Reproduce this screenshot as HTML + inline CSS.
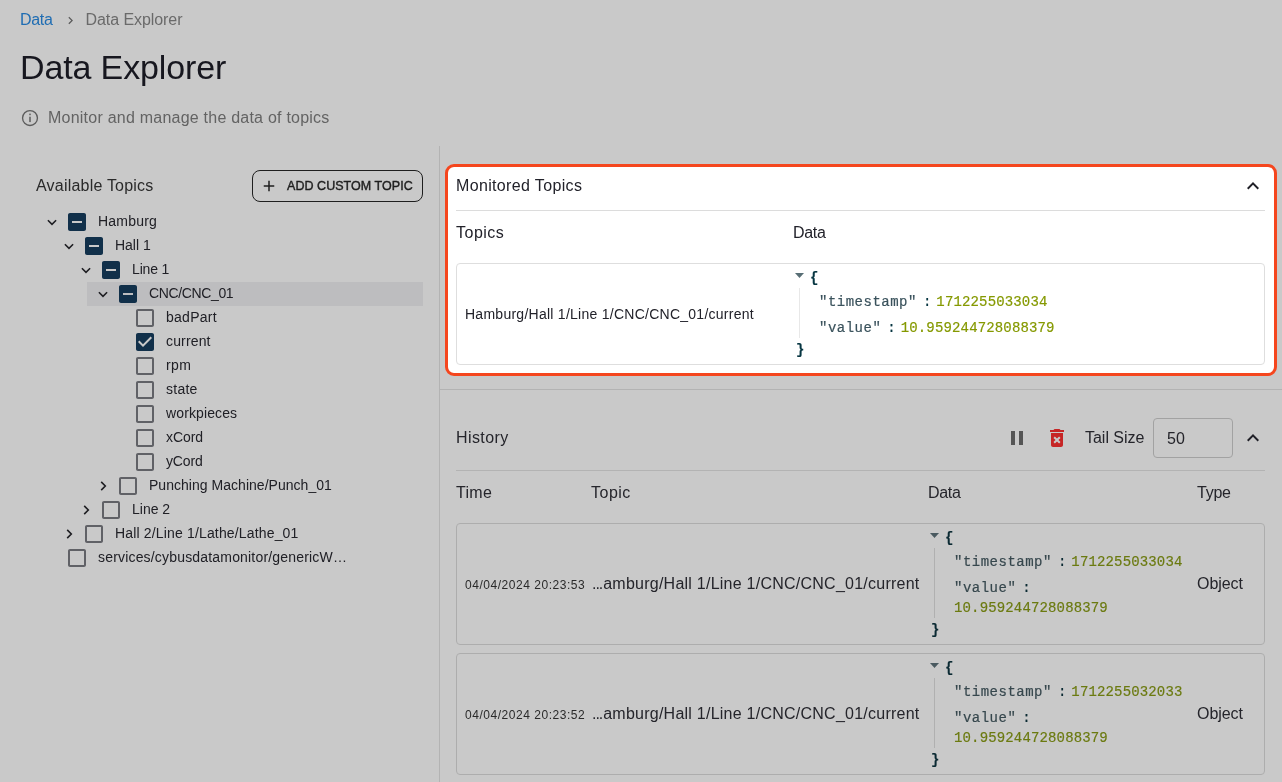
<!DOCTYPE html>
<html><head><meta charset="utf-8">
<style>
*{box-sizing:border-box;margin:0;padding:0}
html,body{width:1282px;height:782px;overflow:hidden;background:#c9c9c9}
body{position:relative;font-family:"Liberation Sans",sans-serif;color:#1c1c22}
.a{position:absolute;white-space:nowrap;line-height:1}
.mono{font-family:"Liberation Mono",monospace;-webkit-text-stroke:0.2px}
svg{position:absolute;display:block}
</style></head><body><div id="root" style="position:absolute;left:0;top:0;width:1282px;height:782px;will-change:transform">
<div class="a" style="left:20px;top:12px;font-size:16px;color:#1f6db3;letter-spacing:-0.34px;">Data</div>
<svg style="left:62.5px;top:13px" width="15" height="15" viewBox="0 0 24 24"><path fill="#5c5c5c" d="M10 6 8.59 7.41 13.17 12l-4.58 4.59L10 18l6-6z"/></svg>
<div class="a" style="left:85.5px;top:12px;font-size:16px;color:#6a6a6a;letter-spacing:-0.07px;">Data Explorer</div>
<div class="a" style="left:20px;top:50px;font-size:34px;color:#17171f;letter-spacing:-0.13px;">Data Explorer</div>
<svg style="left:20px;top:108px" width="20" height="20" viewBox="0 0 20 20"><circle cx="10" cy="10" r="7.45" fill="none" stroke="#5c5c5c" stroke-width="1.35"/><rect x="9.25" y="5.6" width="1.5" height="1.6" fill="#5c5c5c"/><rect x="9.25" y="8.7" width="1.5" height="5.4" fill="#5c5c5c"/></svg>
<div class="a" style="left:48px;top:110px;font-size:16px;color:#636363;letter-spacing:0.23px;">Monitor and manage the data of topics</div>
<div class="a" style="left:439px;top:146px;width:1px;height:636px;background:#b3b3b3"></div>
<div class="a" style="left:440px;top:389px;width:842px;height:1px;background:#b3b3b3"></div>
<div class="a" style="left:36px;top:178px;font-size:16px;color:#2a2a2a;letter-spacing:0.21px;">Available Topics</div>
<div class="a" style="left:252px;top:170px;width:171px;height:32px;border:1px solid #1e1e1e;border-radius:8px"></div>
<svg style="left:260px;top:177px" width="18" height="18" viewBox="0 0 24 24"><path fill="#1e1e1e" d="M19 13h-6v6h-2v-6H5v-2h6V5h2v6h6v2z"/></svg>
<div class="a" style="left:287px;top:180px;font-size:12.5px;color:#1e1e1e;letter-spacing:0.05px;-webkit-text-stroke:0.4px #1e1e1e;">ADD CUSTOM TOPIC</div>
<div class="a" style="left:87px;top:282px;width:336px;height:24px;background:#bdbdbf"></div>
<svg style="left:47px;top:218.6px" width="10" height="7" viewBox="0 0 10 7"><path fill="none" stroke="#1e1e22" stroke-width="1.6" d="M0.9 1.2 5 5.3 9.1 1.2"/></svg>
<svg style="left:65px;top:210px" width="24" height="24" viewBox="0 0 24 24"><path fill="#11304a" d="M19 3H5c-1.1 0-2 .9-2 2v14c0 1.1.9 2 2 2h14c1.1 0 2-.9 2-2V5c0-1.1-.9-2-2-2zm-2 10H7v-2h10v2z"/></svg>
<div class="a" style="left:98px;top:214px;font-size:14px;color:#202026;letter-spacing:0.2px;">Hamburg</div>
<svg style="left:64px;top:242.6px" width="10" height="7" viewBox="0 0 10 7"><path fill="none" stroke="#1e1e22" stroke-width="1.6" d="M0.9 1.2 5 5.3 9.1 1.2"/></svg>
<svg style="left:82px;top:234px" width="24" height="24" viewBox="0 0 24 24"><path fill="#11304a" d="M19 3H5c-1.1 0-2 .9-2 2v14c0 1.1.9 2 2 2h14c1.1 0 2-.9 2-2V5c0-1.1-.9-2-2-2zm-2 10H7v-2h10v2z"/></svg>
<div class="a" style="left:115px;top:238px;font-size:14px;color:#202026;letter-spacing:-0.02px;">Hall 1</div>
<svg style="left:81px;top:266.6px" width="10" height="7" viewBox="0 0 10 7"><path fill="none" stroke="#1e1e22" stroke-width="1.6" d="M0.9 1.2 5 5.3 9.1 1.2"/></svg>
<svg style="left:99px;top:258px" width="24" height="24" viewBox="0 0 24 24"><path fill="#11304a" d="M19 3H5c-1.1 0-2 .9-2 2v14c0 1.1.9 2 2 2h14c1.1 0 2-.9 2-2V5c0-1.1-.9-2-2-2zm-2 10H7v-2h10v2z"/></svg>
<div class="a" style="left:132px;top:262px;font-size:14px;color:#202026;letter-spacing:-0.16px;">Line 1</div>
<svg style="left:98px;top:290.6px" width="10" height="7" viewBox="0 0 10 7"><path fill="none" stroke="#1e1e22" stroke-width="1.6" d="M0.9 1.2 5 5.3 9.1 1.2"/></svg>
<svg style="left:116px;top:282px" width="24" height="24" viewBox="0 0 24 24"><path fill="#11304a" d="M19 3H5c-1.1 0-2 .9-2 2v14c0 1.1.9 2 2 2h14c1.1 0 2-.9 2-2V5c0-1.1-.9-2-2-2zm-2 10H7v-2h10v2z"/></svg>
<div class="a" style="left:149px;top:286px;font-size:14px;color:#202026;letter-spacing:-0.37px;">CNC/CNC_01</div>
<svg style="left:133px;top:306px" width="24" height="24" viewBox="0 0 24 24"><path fill="#606166" d="M19 5v14H5V5h14m0-2H5c-1.11 0-2 .9-2 2v14c0 1.1.89 2 2 2h14c1.1 0 2-.9 2-2V5c0-1.1-.9-2-2-2z"/></svg>
<div class="a" style="left:166px;top:310px;font-size:14px;color:#202026;letter-spacing:0.26px;">badPart</div>
<svg style="left:133px;top:330px" width="24" height="24" viewBox="0 0 24 24"><path fill="#11304a" d="M19 3H5c-1.11 0-2 .9-2 2v14c0 1.1.89 2 2 2h14c1.1 0 2-.9 2-2V5c0-1.1-.9-2-2-2zm-9 14l-5-5 1.41-1.41L10 14.17l7.59-7.59L19 8l-9 9z"/></svg>
<div class="a" style="left:166px;top:334px;font-size:14px;color:#202026;letter-spacing:0.15px;">current</div>
<svg style="left:133px;top:354px" width="24" height="24" viewBox="0 0 24 24"><path fill="#606166" d="M19 5v14H5V5h14m0-2H5c-1.11 0-2 .9-2 2v14c0 1.1.89 2 2 2h14c1.1 0 2-.9 2-2V5c0-1.1-.9-2-2-2z"/></svg>
<div class="a" style="left:166px;top:358px;font-size:14px;color:#202026;letter-spacing:0.4px;">rpm</div>
<svg style="left:133px;top:378px" width="24" height="24" viewBox="0 0 24 24"><path fill="#606166" d="M19 5v14H5V5h14m0-2H5c-1.11 0-2 .9-2 2v14c0 1.1.89 2 2 2h14c1.1 0 2-.9 2-2V5c0-1.1-.9-2-2-2z"/></svg>
<div class="a" style="left:166px;top:382px;font-size:14px;color:#202026;letter-spacing:0.26px;">state</div>
<svg style="left:133px;top:402px" width="24" height="24" viewBox="0 0 24 24"><path fill="#606166" d="M19 5v14H5V5h14m0-2H5c-1.11 0-2 .9-2 2v14c0 1.1.89 2 2 2h14c1.1 0 2-.9 2-2V5c0-1.1-.9-2-2-2z"/></svg>
<div class="a" style="left:166px;top:406px;font-size:14px;color:#202026;letter-spacing:0.12px;">workpieces</div>
<svg style="left:133px;top:426px" width="24" height="24" viewBox="0 0 24 24"><path fill="#606166" d="M19 5v14H5V5h14m0-2H5c-1.11 0-2 .9-2 2v14c0 1.1.89 2 2 2h14c1.1 0 2-.9 2-2V5c0-1.1-.9-2-2-2z"/></svg>
<div class="a" style="left:166px;top:430px;font-size:14px;color:#202026;letter-spacing:-0.08px;">xCord</div>
<svg style="left:133px;top:450px" width="24" height="24" viewBox="0 0 24 24"><path fill="#606166" d="M19 5v14H5V5h14m0-2H5c-1.11 0-2 .9-2 2v14c0 1.1.89 2 2 2h14c1.1 0 2-.9 2-2V5c0-1.1-.9-2-2-2z"/></svg>
<div class="a" style="left:166px;top:454px;font-size:14px;color:#202026;letter-spacing:-0.15px;">yCord</div>
<svg style="left:100px;top:481px" width="7" height="10" viewBox="0 0 7 10"><path fill="none" stroke="#1e1e22" stroke-width="1.6" d="M1.2 0.9 5.3 5 1.2 9.1"/></svg>
<svg style="left:116px;top:474px" width="24" height="24" viewBox="0 0 24 24"><path fill="#606166" d="M19 5v14H5V5h14m0-2H5c-1.11 0-2 .9-2 2v14c0 1.1.89 2 2 2h14c1.1 0 2-.9 2-2V5c0-1.1-.9-2-2-2z"/></svg>
<div class="a" style="left:149px;top:478px;font-size:14px;color:#202026;letter-spacing:0.03px;">Punching Machine/Punch_01</div>
<svg style="left:83px;top:505px" width="7" height="10" viewBox="0 0 7 10"><path fill="none" stroke="#1e1e22" stroke-width="1.6" d="M1.2 0.9 5.3 5 1.2 9.1"/></svg>
<svg style="left:99px;top:498px" width="24" height="24" viewBox="0 0 24 24"><path fill="#606166" d="M19 5v14H5V5h14m0-2H5c-1.11 0-2 .9-2 2v14c0 1.1.89 2 2 2h14c1.1 0 2-.9 2-2V5c0-1.1-.9-2-2-2z"/></svg>
<div class="a" style="left:132px;top:502px;font-size:14px;color:#202026;letter-spacing:0px;">Line 2</div>
<svg style="left:66px;top:529px" width="7" height="10" viewBox="0 0 7 10"><path fill="none" stroke="#1e1e22" stroke-width="1.6" d="M1.2 0.9 5.3 5 1.2 9.1"/></svg>
<svg style="left:82px;top:522px" width="24" height="24" viewBox="0 0 24 24"><path fill="#606166" d="M19 5v14H5V5h14m0-2H5c-1.11 0-2 .9-2 2v14c0 1.1.89 2 2 2h14c1.1 0 2-.9 2-2V5c0-1.1-.9-2-2-2z"/></svg>
<div class="a" style="left:115px;top:526px;font-size:14px;color:#202026;letter-spacing:0.16px;">Hall 2/Line 1/Lathe/Lathe_01</div>
<svg style="left:65px;top:546px" width="24" height="24" viewBox="0 0 24 24"><path fill="#606166" d="M19 5v14H5V5h14m0-2H5c-1.11 0-2 .9-2 2v14c0 1.1.89 2 2 2h14c1.1 0 2-.9 2-2V5c0-1.1-.9-2-2-2z"/></svg>
<div class="a" style="left:98px;top:550px;font-size:14px;color:#202026;letter-spacing:0.18px;">services/cybusdatamonitor/genericW…</div>
<div class="a" style="left:445px;top:164px;width:832px;height:212px;border:3px solid #f5461e;border-radius:9px;background:#fff"></div>
<div class="a" style="left:456px;top:178px;font-size:16px;color:#22222a;letter-spacing:0.35px;">Monitored Topics</div>
<svg style="left:1241px;top:174px" width="24" height="24" viewBox="0 0 24 24"><path fill="#1f1f27" d="m12 8-6 6 1.41 1.41L12 10.83l4.59 4.58L18 14z"/></svg>
<div class="a" style="left:456px;top:210px;width:809px;height:1px;background:#dcdcdc"></div>
<div class="a" style="left:456px;top:225px;font-size:16px;color:#22222a;letter-spacing:0.5px;">Topics</div>
<div class="a" style="left:793px;top:225px;font-size:16px;color:#22222a;letter-spacing:-0.3px;">Data</div>
<div class="a" style="left:456px;top:263px;width:809px;height:102px;border:1px solid #dedede;border-radius:4px"></div>
<div class="a" style="left:465px;top:307px;font-size:14px;color:#22222a;letter-spacing:0.26px;">Hamburg/Hall 1/Line 1/CNC/CNC_01/current</div>
<svg style="left:795px;top:273px" width="9" height="5" viewBox="0 0 9 5"><path fill="#586e75" d="M0 0h9L4.5 5z"/></svg>
<div class="a mono" style="left:810px;top:271px;font-size:14px;color:#073642;letter-spacing:0px;font-weight:700;">{</div>
<div class="a" style="left:799px;top:288px;width:1px;height:50px;background:#e8e8e8"></div>
<div class="a mono" style="left:819px;top:295px;font-size:14px;color:#3a525c;letter-spacing:0px;"><span style="letter-spacing:0.5px">"timestamp"</span><span style="margin:0 5px 0 6px;color:#073642">:</span><span style="color:#859900;letter-spacing:0.15px">1712255033034</span></div>
<div class="a mono" style="left:819px;top:321px;font-size:14px;color:#3a525c;letter-spacing:0px;"><span style="letter-spacing:0.5px">"value"</span><span style="margin:0 5px 0 6px;color:#073642">:</span><span style="color:#859900;letter-spacing:0.15px">10.959244728088379</span></div>
<div class="a mono" style="left:796px;top:343px;font-size:14px;color:#073642;letter-spacing:0px;font-weight:700;">}</div>
<div class="a" style="left:456px;top:430px;font-size:16px;color:#25252b;letter-spacing:0.41px;">History</div>
<svg style="left:1005px;top:426px" width="24" height="24" viewBox="0 0 24 24"><path fill="#555" d="M6 19h4V5H6v14zm8-14v14h4V5h-4z"/></svg>
<svg style="left:1045px;top:426px" width="24" height="24" viewBox="0 0 24 24"><path fill="#c62525" d="M6 19c0 1.1.9 2 2 2h8c1.1 0 2-.9 2-2V7H6v12zm2.46-7.12 1.41-1.41L12 12.59l2.12-2.12 1.41 1.41L13.41 14l2.12 2.12-1.41 1.41L12 15.41l-2.12 2.12-1.41-1.41L10.59 14l-2.13-2.12zM15.5 4l-1-1h-5l-1 1H5v2h14V4z"/></svg>
<div class="a" style="left:1085px;top:430px;font-size:16px;color:#25252b;letter-spacing:-0.02px;">Tail Size</div>
<div class="a" style="left:1153px;top:418px;width:80px;height:40px;border:1px solid #a2a2a2;border-radius:4px"></div>
<div class="a" style="left:1167px;top:431px;font-size:16px;color:#25252b;letter-spacing:0.15px;">50</div>
<svg style="left:1241px;top:426px" width="24" height="24" viewBox="0 0 24 24"><path fill="#1f1f27" d="m12 8-6 6 1.41 1.41L12 10.83l4.59 4.58L18 14z"/></svg>
<div class="a" style="left:456px;top:470px;width:809px;height:1px;background:#b3b3b3"></div>
<div class="a" style="left:456px;top:485px;font-size:16px;color:#25252b;letter-spacing:0.28px;">Time</div>
<div class="a" style="left:591px;top:485px;font-size:16px;color:#25252b;letter-spacing:0.5px;">Topic</div>
<div class="a" style="left:928px;top:485px;font-size:16px;color:#25252b;letter-spacing:-0.3px;">Data</div>
<div class="a" style="left:1197px;top:485px;font-size:16px;color:#25252b;letter-spacing:-0.25px;">Type</div>
<div class="a" style="left:456px;top:523px;width:809px;height:122px;border:1px solid #adadad;border-radius:4px"></div>
<div class="a" style="left:465px;top:579px;font-size:12px;color:#2a2a2a;letter-spacing:0.53px;">04/04/2024 20:23:53</div>
<div class="a" style="left:592px;top:576px;font-size:16px;color:#25252b;letter-spacing:0.245px;"><span style="letter-spacing:-1.05px;margin-right:1px">...</span>amburg/Hall 1/Line 1/CNC/CNC_01/current</div>
<div class="a" style="left:1197px;top:576px;font-size:16px;color:#25252b;letter-spacing:-0.07px;">Object</div>
<svg style="left:930px;top:533px" width="9" height="5" viewBox="0 0 9 5"><path fill="#4a5a60" d="M0 0h9L4.5 5z"/></svg>
<div class="a mono" style="left:945px;top:531px;font-size:14px;color:#0b2a33;letter-spacing:0px;font-weight:700;">{</div>
<div class="a" style="left:934px;top:548px;width:1px;height:70px;background:#b0b0b0"></div>
<div class="a mono" style="left:954px;top:555px;font-size:14px;color:#36474d;letter-spacing:0px;"><span style="letter-spacing:0.5px">"timestamp"</span><span style="margin:0 5px 0 6px;color:#0b2a33">:</span><span style="color:#6b7a10;letter-spacing:0.15px">1712255033034</span></div>
<div class="a mono" style="left:954px;top:581px;font-size:14px;color:#36474d;letter-spacing:0px;"><span style="letter-spacing:0.5px">"value"</span><span style="margin:0 5px 0 6px;color:#0b2a33">:</span></div>
<div class="a mono" style="left:954px;top:600.5px;font-size:14px;color:#6b7a10;letter-spacing:0.15px;">10.959244728088379</div>
<div class="a mono" style="left:931px;top:623px;font-size:14px;color:#0b2a33;letter-spacing:0px;font-weight:700;">}</div>
<div class="a" style="left:456px;top:653px;width:809px;height:122px;border:1px solid #adadad;border-radius:4px"></div>
<div class="a" style="left:465px;top:709px;font-size:12px;color:#2a2a2a;letter-spacing:0.53px;">04/04/2024 20:23:52</div>
<div class="a" style="left:592px;top:706px;font-size:16px;color:#25252b;letter-spacing:0.245px;"><span style="letter-spacing:-1.05px;margin-right:1px">...</span>amburg/Hall 1/Line 1/CNC/CNC_01/current</div>
<div class="a" style="left:1197px;top:706px;font-size:16px;color:#25252b;letter-spacing:-0.07px;">Object</div>
<svg style="left:930px;top:663px" width="9" height="5" viewBox="0 0 9 5"><path fill="#4a5a60" d="M0 0h9L4.5 5z"/></svg>
<div class="a mono" style="left:945px;top:661px;font-size:14px;color:#0b2a33;letter-spacing:0px;font-weight:700;">{</div>
<div class="a" style="left:934px;top:678px;width:1px;height:70px;background:#b0b0b0"></div>
<div class="a mono" style="left:954px;top:685px;font-size:14px;color:#36474d;letter-spacing:0px;"><span style="letter-spacing:0.5px">"timestamp"</span><span style="margin:0 5px 0 6px;color:#0b2a33">:</span><span style="color:#6b7a10;letter-spacing:0.15px">1712255032033</span></div>
<div class="a mono" style="left:954px;top:711px;font-size:14px;color:#36474d;letter-spacing:0px;"><span style="letter-spacing:0.5px">"value"</span><span style="margin:0 5px 0 6px;color:#0b2a33">:</span></div>
<div class="a mono" style="left:954px;top:730.5px;font-size:14px;color:#6b7a10;letter-spacing:0.15px;">10.959244728088379</div>
<div class="a mono" style="left:931px;top:753px;font-size:14px;color:#0b2a33;letter-spacing:0px;font-weight:700;">}</div>
</div></body></html>
